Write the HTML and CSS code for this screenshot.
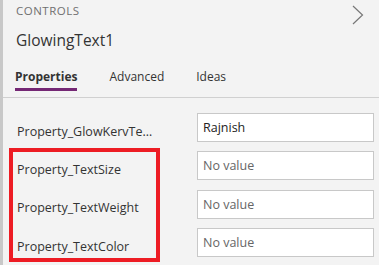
FILE: index.html
```html
<!DOCTYPE html>
<html>
<head>
<meta charset="utf-8">
<link rel="stylesheet" href="styles.css">
</head>
<body>
<div class="panel">
  <div class="header">
    <div class="kicker">CONTROLS</div>
    <div class="title">GlowingText1</div>
    <svg class="chevron" width="12" height="20" viewBox="0 0 12 20"><path d="M1 1 L10.5 10 L1 19" fill="none" stroke="#777" stroke-width="1.2"/></svg>
  </div>
  <div class="tabs">
    <div class="tab active">Properties</div>
    <div class="tab">Advanced</div>
    <div class="tab">Ideas</div>
  </div>
  <div class="rows">
    <div class="row">
      <div class="label">Property_GlowKervTextValue</div>
      <div class="input value">Rajnish</div>
    </div>
    <div class="row">
      <div class="label">Property_TextSize</div>
      <div class="input">No value</div>
    </div>
    <div class="row">
      <div class="label">Property_TextWeight</div>
      <div class="input">No value</div>
    </div>
    <div class="row">
      <div class="label">Property_TextColor</div>
      <div class="input">No value</div>
    </div>
    <div class="highlight"></div>
  </div>
</div>
</body>
</html>
```
FILE: styles.css
```css
html, body {
  margin: 0;
  padding: 0;
  background: #f3f3f3;
}
body {
  font-family: "Open Sans", "Noto Sans", sans-serif;
  color: #333;
}
.panel {
  width: 379px;
  height: 265px;
  box-sizing: border-box;
  border-left: 3px solid #c8c8c8;
  background: #f3f3f3;
  position: relative;
  overflow: hidden;
}
.header {
  position: relative;
  padding: 3px 0 0 13px;
  height: 64px;
  box-sizing: border-box;
}
.kicker {
  font-size: 11.5px;
  line-height: 16px;
  color: #707070;
  letter-spacing: 0.5px;
}
.title {
  margin-top: 9px;
  font-family: "Open Sans", sans-serif;
  font-size: 15.5px;
  line-height: 24px;
  color: #333;
}
.chevron {
  position: absolute;
  right: 15px;
  top: 5px;
}
.tabs {
  display: flex;
  padding-left: 12px;
  border-bottom: 1px solid #d0d0d0;
  height: 34px;
  box-sizing: border-box;
}
.tab {
  font-size: 12px;
  line-height: 20px;
  padding-top: 3px;
  margin-right: 32px;
  color: #333;
}
.tab.active {
  font-weight: 700;
  color: #333;
  border-bottom: 3px solid #742774;
  height: 27px;
  box-sizing: border-box;
}
.rows {
  position: relative;
  padding: 15px 5px 0 14px;
  display: flex;
  flex-direction: column;
  gap: 9.4px;
}
.row {
  display: flex;
  align-items: center;
  height: 29px;
}
.label {
  width: 140px;
  margin-right: 40px;
  padding-top: 7px;
  font-size: 12.5px;
  white-space: nowrap;
  overflow: hidden;
  text-overflow: ellipsis;
  color: #333;
}
.input {
  flex: 1;
  height: 29px;
  box-sizing: border-box;
  border: 1px solid #c8c8c8;
  background: #fff;
  font-size: 12.5px;
  line-height: 27px;
  padding-left: 5px;
  color: #666;
}
.input.value {
  color: #222;
}
.highlight {
  position: absolute;
  left: 6px;
  top: 50px;
  width: 151px;
  height: 114px;
  box-sizing: border-box;
  border: 4px solid #ed1c24;
}
```
